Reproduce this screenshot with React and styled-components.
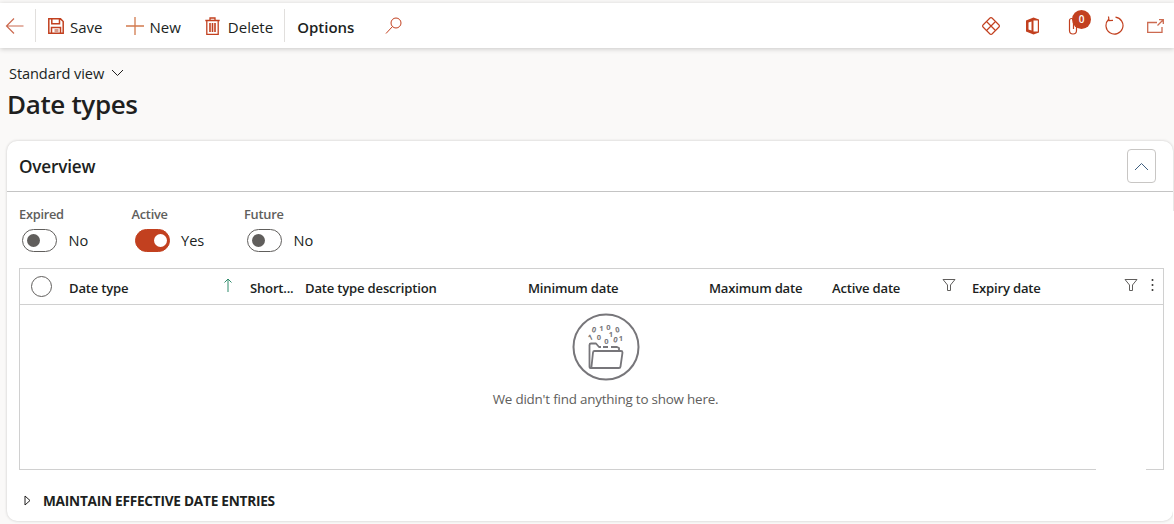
import React from "react"
import styled, { createGlobalStyle } from "styled-components"

const accent = "#c2401f"
const ink = "#201f1e"

const GlobalStyle = createGlobalStyle`
  html, body {
    margin: 0;
    height: 100%;
    background: #faf9f8;
    overflow: hidden;
  }
  body, button {
    font-family: "Open Sans", "Noto Sans", "Liberation Sans", sans-serif;
    color: ${ink};
  }
`

const Page = styled.div`
  height: 524px;
  padding-top: 3px;
  box-sizing: border-box;
  background: #faf9f8;
`

const Toolbar = styled.div`
  display: flex;
  align-items: center;
  height: 45px;
  background: #fff;
  box-shadow: 0 1px 5px rgba(0, 0, 0, 0.2);
  padding-right: 9px;
`

const ToolButton = styled.button`
  display: flex;
  align-items: center;
  gap: ${(p) => p.$gap || 6}px;
  height: 33px;
  padding: 0;
  margin-left: ${(p) => p.$left || 0}px;
  border: 0;
  background: none;
  font-size: 15px;
  font-weight: ${(p) => (p.$bold ? 600 : 400)};
  color: ${ink};
  white-space: nowrap;
`

const ToolLabel = styled.span`
  margin-top: 3px;
`

const ToolDivider = styled.div`
  width: 1px;
  height: 33px;
  margin-left: ${(p) => p.$left}px;
  background: #e1dfdd;
`

const ToolGroup = styled.div`
  display: flex;
  align-items: center;
  gap: 21px;
  margin-left: auto;
`

const ToolIcon = styled.div`
  position: relative;
  display: flex;
  justify-content: center;
  width: 20px;
  margin-left: ${(p) => p.$left || 0}px;
`

const Badge = styled.span`
  position: absolute;
  top: -7px;
  left: 9px;
  width: 19px;
  height: 19px;
  border-radius: 50%;
  background: ${accent};
  color: #fff;
  font-size: 10px;
  font-weight: 600;
  line-height: 19px;
  text-align: center;
`

const Header = styled.div`
  padding: 15px 9px 0;
`

const ViewPicker = styled.div`
  display: flex;
  align-items: center;
  gap: 7px;
  height: 20px;
  font-size: 14.6px;
  letter-spacing: -0.1px;
`

const Title = styled.h1`
  margin: 4px 0 0 -2px;
  font-size: 26px;
  line-height: 35px;
  font-weight: 600;
  letter-spacing: -0.35px;
`

const Card = styled.section`
  position: relative;
  height: 380px;
  margin: 19px 1px 0 7px;
  box-sizing: border-box;
  background: #fff;
  border-radius: 10px;
  box-shadow: 0 0 3px rgba(0, 0, 0, 0.2);
`

const CardEdge = styled.div`
  position: absolute;
  top: 70px;
  right: -1px;
  bottom: 0;
  width: 1px;
  background: #fff;
`

const CardHead = styled.div`
  display: flex;
  align-items: center;
  justify-content: space-between;
  height: 50px;
  padding: 0 17px 0 12px;
  border-bottom: 1px solid #c4c4c4;
`

const CardTitle = styled.h2`
  margin: 0;
  font-size: 17.2px;
  font-weight: 600;
  letter-spacing: -0.2px;
`

const CollapseButton = styled.button`
  display: flex;
  align-items: center;
  justify-content: center;
  width: 29px;
  height: 34px;
  padding: 0;
  background: #fff;
  border: 1px solid #c8c6c4;
  border-radius: 4px;
`

const Toggles = styled.div`
  display: flex;
  padding: 14px 12px 0;
  height: 62px;
`

const ToggleField = styled.div`
  width: 112.5px;
`

const ToggleLabel = styled.div`
  font-size: 12.8px;
  line-height: 16px;
  font-weight: 600;
  letter-spacing: -0.25px;
  color: #605e5c;
`

const ToggleRow = styled.div`
  display: flex;
  align-items: center;
  gap: 11.5px;
  margin-top: 7px;
  padding-left: 3px;
  font-size: 14.6px;
`

const ToggleText = styled.span`
  margin-top: -2px;
`

const Track = styled.span`
  position: relative;
  width: 35px;
  height: 23px;
  box-sizing: border-box;
  border-radius: 12px;
  border: 1px solid ${(p) => (p.$on ? accent : "#605e5c")};
  background: ${(p) => (p.$on ? accent : "#fff")};
`

const Knob = styled.span`
  position: absolute;
  top: 4px;
  left: ${(p) => (p.$on ? 18 : 4)}px;
  width: 13px;
  height: 13px;
  border-radius: 50%;
  background: ${(p) => (p.$on ? "#fff" : "#605e5c")};
`

const Table = styled.div`
  position: relative;
  height: 202px;
  margin: 0 9px 0 12px;
  box-sizing: border-box;
  border: 1px solid #d0d0d0;
`

const BorderGap = styled.div`
  position: absolute;
  left: 1076px;
  bottom: -1px;
  width: 50px;
  height: 1px;
  background: #fff;
`

const HeadRow = styled.div`
  display: grid;
  grid-template-columns: 49px 181px 55px 223px 181px 123px 140px 1fr;
  padding-top: 4px;
  height: 31px;
  align-items: center;
  border-bottom: 1px solid #d0d0d0;
`

const HeadCell = styled.div`
  display: flex;
  align-items: center;
  justify-content: space-between;
  padding-bottom: 2px;
  font-size: 13.1px;
  font-weight: 600;
  letter-spacing: -0.2px;
  white-space: nowrap;
`

const HeadIcons = styled.div`
  display: flex;
  align-items: center;
  gap: ${(p) => p.$gap || 0}px;
  padding-right: ${(p) => p.$pad || 0}px;
  margin-top: -6px;
`

const SelectCircle = styled.div`
  width: 19px;
  height: 19px;
  margin-left: 11px;
  border: 1px solid #605e5c;
  border-radius: 50%;
  margin-top: -4px;
`

const Empty = styled.div`
  display: flex;
  flex-direction: column;
  align-items: center;
  padding: 8px 0 0 28px;
`

const EmptyText = styled.div`
  margin-top: 9px;
  font-size: 13.4px;
  letter-spacing: -0.2px;
  color: #605e5c;
`

const Section = styled.div`
  display: flex;
  align-items: center;
  gap: 12px;
  padding: 21px 0 0 17px;
  font-size: 13.65px;
  font-weight: 700;
  letter-spacing: -0.25px;
`

const Icon = ({ size = 20, w, h, view = "0 0 20 20", color = accent, width = 1, children }) => (
  <svg
    width={w || size}
    height={h || size}
    viewBox={view}
    fill="none"
    stroke={color}
    strokeWidth={width}
    style={{ display: "block", flexShrink: 0 }}
  >
    {children}
  </svg>
)

const digits = [
  ["0", 22, 17, 15],
  ["1", 29.5, 15, 0],
  ["0", 36.5, 14, 0],
  ["0", 45.5, 17, -10],
  ["1", 18.5, 24.5, -25],
  ["0", 27, 24.5, 0],
  ["1", 39, 21, 0],
  ["0", 34.5, 28, 0],
  ["0", 43.5, 27, 15],
  ["1", 49, 25.5, 0],
]

const FolderIcon = () => (
  <svg width="68" height="68" viewBox="0 0 68 68" fill="none" stroke="#77767a" style={{ display: "block" }}>
    <circle cx="34" cy="34" r="32.5" strokeWidth="2" />
    <path
      d="M20 55 H18.500 q-1 0-1-1 V32 q0-1.500 1.500-1.500 h5 l3 3.500 h2 M31 34 h5 M39 34 h6 l2 1 v3 M22.500 38 H49 q1.500 0 1.500 1.500 l-2 14 q-.2 1.500-1.500 1.500 H20 q-1 0-.5-1.500 l1.500-14 q.2-1.500 1.500-1.500 Z"
      strokeWidth="1.800"
      strokeLinejoin="round"
    />
    <g fill="#77767a" stroke="none" fontSize="7.500" fontWeight="700" fontFamily="Open Sans, sans-serif" textAnchor="middle">
      {digits.map(([d, x, y, r], i) => (
        <text key={i} x={x} y={y + 2.5} transform={`rotate(${r} ${x} ${y})`}>
          {d}
        </text>
      ))}
    </g>
  </svg>
)

const FilterIcon = () => (
  <Icon size={14} view="0 0 14 14" color="#605e5c">
    <path d="M1 1.500 H13 L8.500 7 V12.500 H5.500 V7 Z" strokeLinejoin="round" />
  </Icon>
)

const toggles = [
  { label: "Expired", on: false },
  { label: "Active", on: true },
  { label: "Future", on: false },
]

const columns = ["Short...", "Date type description", "Minimum date", "Maximum date"]

export default function App() {
  return (
    <Page>
      <GlobalStyle />
      <Toolbar>
        <ToolIcon $left={4}>
          <Icon w={19} h={18} view="0 0 19 18">
            <path d="M18.500 9 H1.500 M9 1.500 L1.500 9 L9 16.500" stroke="#cc6a50" strokeWidth="1.200" />
          </Icon>
        </ToolIcon>
        <ToolDivider $left={11} />
        <ToolButton $left={12} $gap={6}>
          <Icon size={16} view="0 0 16 16" width={1.500}>
            <path d="M0.800 0.800 H12.500 L15.200 3.500 V15.200 H0.800 Z M3.800 1 V5.800 H11.500 V1 M3.500 15 V9.500 H12.500 V15" />
            <path d="M6.500 11 H10.500 V15 H6.500 Z" fill="#d99a8a" stroke="none" />
          </Icon>
          <ToolLabel>Save</ToolLabel>
        </ToolButton>
        <ToolButton $left={24} $gap={5}>
          <Icon size={18} view="0 0 18 18">
            <path d="M9 0 V18 M0 9 H18" stroke="#d27a4e" strokeWidth="1.300" />
          </Icon>
          <ToolLabel>New</ToolLabel>
        </ToolButton>
        <ToolButton $left={24} $gap={8}>
          <Icon w={15} h={18} view="0 0 15 18" width={1.300}>
            <path d="M0.300 3.500 H14.700 M5 3 V1 H10 V3 M1.800 3.500 V17.300 H13.200 V3.500" />
            <path d="M5 6 V15 M7.500 6 V15 M10 6 V15" strokeWidth="1.600" />
          </Icon>
          <ToolLabel>Delete</ToolLabel>
        </ToolButton>
        <ToolDivider $left={11} />
        <ToolButton $left={12} $bold>
          <ToolLabel>Options</ToolLabel>
        </ToolButton>
        <ToolIcon $left={29}>
          <Icon size={17} view="0 0 17 17">
            <circle cx="11" cy="6" r="5" />
            <path d="M7.500 9.500 L1 16.500" />
          </Icon>
        </ToolIcon>
        <ToolGroup>
          <ToolIcon>
            <Icon size={18} view="0 0 18 18" width={1.200}>
              <path
                d="M8 1 Q9 0.200 10 1 L17 8 Q17.800 9 17 10 L10 17 Q9 17.800 8 17 L1 10 Q0.200 9 1 8 Z M5 5 L13 13 M13 5 L5 13"
                strokeLinejoin="round"
              />
            </Icon>
          </ToolIcon>
          <ToolIcon>
            <Icon w={15} h={18} view="0 0 15 18">
              <path d="M8.500 0.500 L14 2.500 V15.500 L8.500 17.500 L1 14.500 V3.500 Z" fill={accent} stroke="none" />
              <path d="M8.500 3.500 H12.800 V14.500 H8.500 Z M3.500 5.500 L6.500 4.500 V13.500 L3.500 12.500 Z" fill="#fff" stroke="none" />
            </Icon>
          </ToolIcon>
          <ToolIcon>
            <Icon w={10} h={18} view="0 0 10 18" width={1.200}>
              <path d="M8.500 5 V13.500 a3.500 3.500 0 0 1-7 0 V3.500 a2 2 0 0 1 4 0 V12" />
            </Icon>
            <Badge>0</Badge>
          </ToolIcon>
          <ToolIcon>
            <Icon size={19} view="0 0 19 19" width={1.200}>
              <path d="M10.500 1.100 A8.500 8.500 0 1 1 3.500 3.500 M3.500 0.500 L4 4.500 L8 4.300" />
            </Icon>
          </ToolIcon>
          <ToolIcon>
            <Icon w={17} h={14} view="0 0 17 14" width={1.300}>
              <path d="M10 3.500 H0.700 V13.300 H15 V8 M10.500 6.500 L16 1 M12 0.700 H16.300 V5" stroke="#cc6a50" />
            </Icon>
          </ToolIcon>
        </ToolGroup>
      </Toolbar>

      <Header>
        <ViewPicker>
          Standard view
          <Icon w={13} h={8} view="0 0 13 8" color={ink}>
            <path d="M1 1 L6.500 6.500 L12 1" />
          </Icon>
        </ViewPicker>
        <Title>Date types</Title>
      </Header>

      <Card>
        <CardHead>
          <CardTitle>Overview</CardTitle>
          <CollapseButton aria-label="Collapse">
            <Icon w={15} h={9} view="0 0 15 9" color="#3f5f7f">
              <path d="M1 8 L7.500 1.500 L14 8" />
            </Icon>
          </CollapseButton>
        </CardHead>

        <Toggles>
          {toggles.map((t) => (
            <ToggleField key={t.label}>
              <ToggleLabel>{t.label}</ToggleLabel>
              <ToggleRow>
                <Track $on={t.on}>
                  <Knob $on={t.on} />
                </Track>
                <ToggleText>{t.on ? "Yes" : "No"}</ToggleText>
              </ToggleRow>
            </ToggleField>
          ))}
        </Toggles>

        <Table>
          <HeadRow>
            <SelectCircle />
            <HeadCell>
              Date type
              <HeadIcons $pad={18}>
                <Icon w={8} h={14} view="0 0 8 14" color="#2e8b6b">
                  <path d="M4 14 V1 M0.500 4.500 L4 1 L7.500 4.500" />
                </Icon>
              </HeadIcons>
            </HeadCell>
            {columns.map((c) => (
              <HeadCell key={c}>{c}</HeadCell>
            ))}
            <HeadCell>
              Active date
              <HeadIcons $pad={16}>
                <FilterIcon />
              </HeadIcons>
            </HeadCell>
            <HeadCell>
              Expiry date
              <HeadIcons $pad={9} $gap={13}>
                <FilterIcon />
                <Icon w={3} h={14} view="0 0 3 14" color="none">
                  <g fill="#323130">
                    <circle cx="1.500" cy="2" r="1" />
                    <circle cx="1.500" cy="7" r="1" />
                    <circle cx="1.500" cy="12" r="1" />
                  </g>
                </Icon>
              </HeadIcons>
            </HeadCell>
          </HeadRow>
          <Empty>
            <FolderIcon />
            <EmptyText>We didn't find anything to show here.</EmptyText>
          </Empty>
          <BorderGap />
        </Table>

        <Section>
          <Icon w={7} h={11} view="0 0 7 11" color={ink}>
            <path d="M1 1 L6 5.500 L1 10 Z" />
          </Icon>
          MAINTAIN EFFECTIVE DATE ENTRIES
        </Section>
        <CardEdge />
      </Card>
    </Page>
  )
}
